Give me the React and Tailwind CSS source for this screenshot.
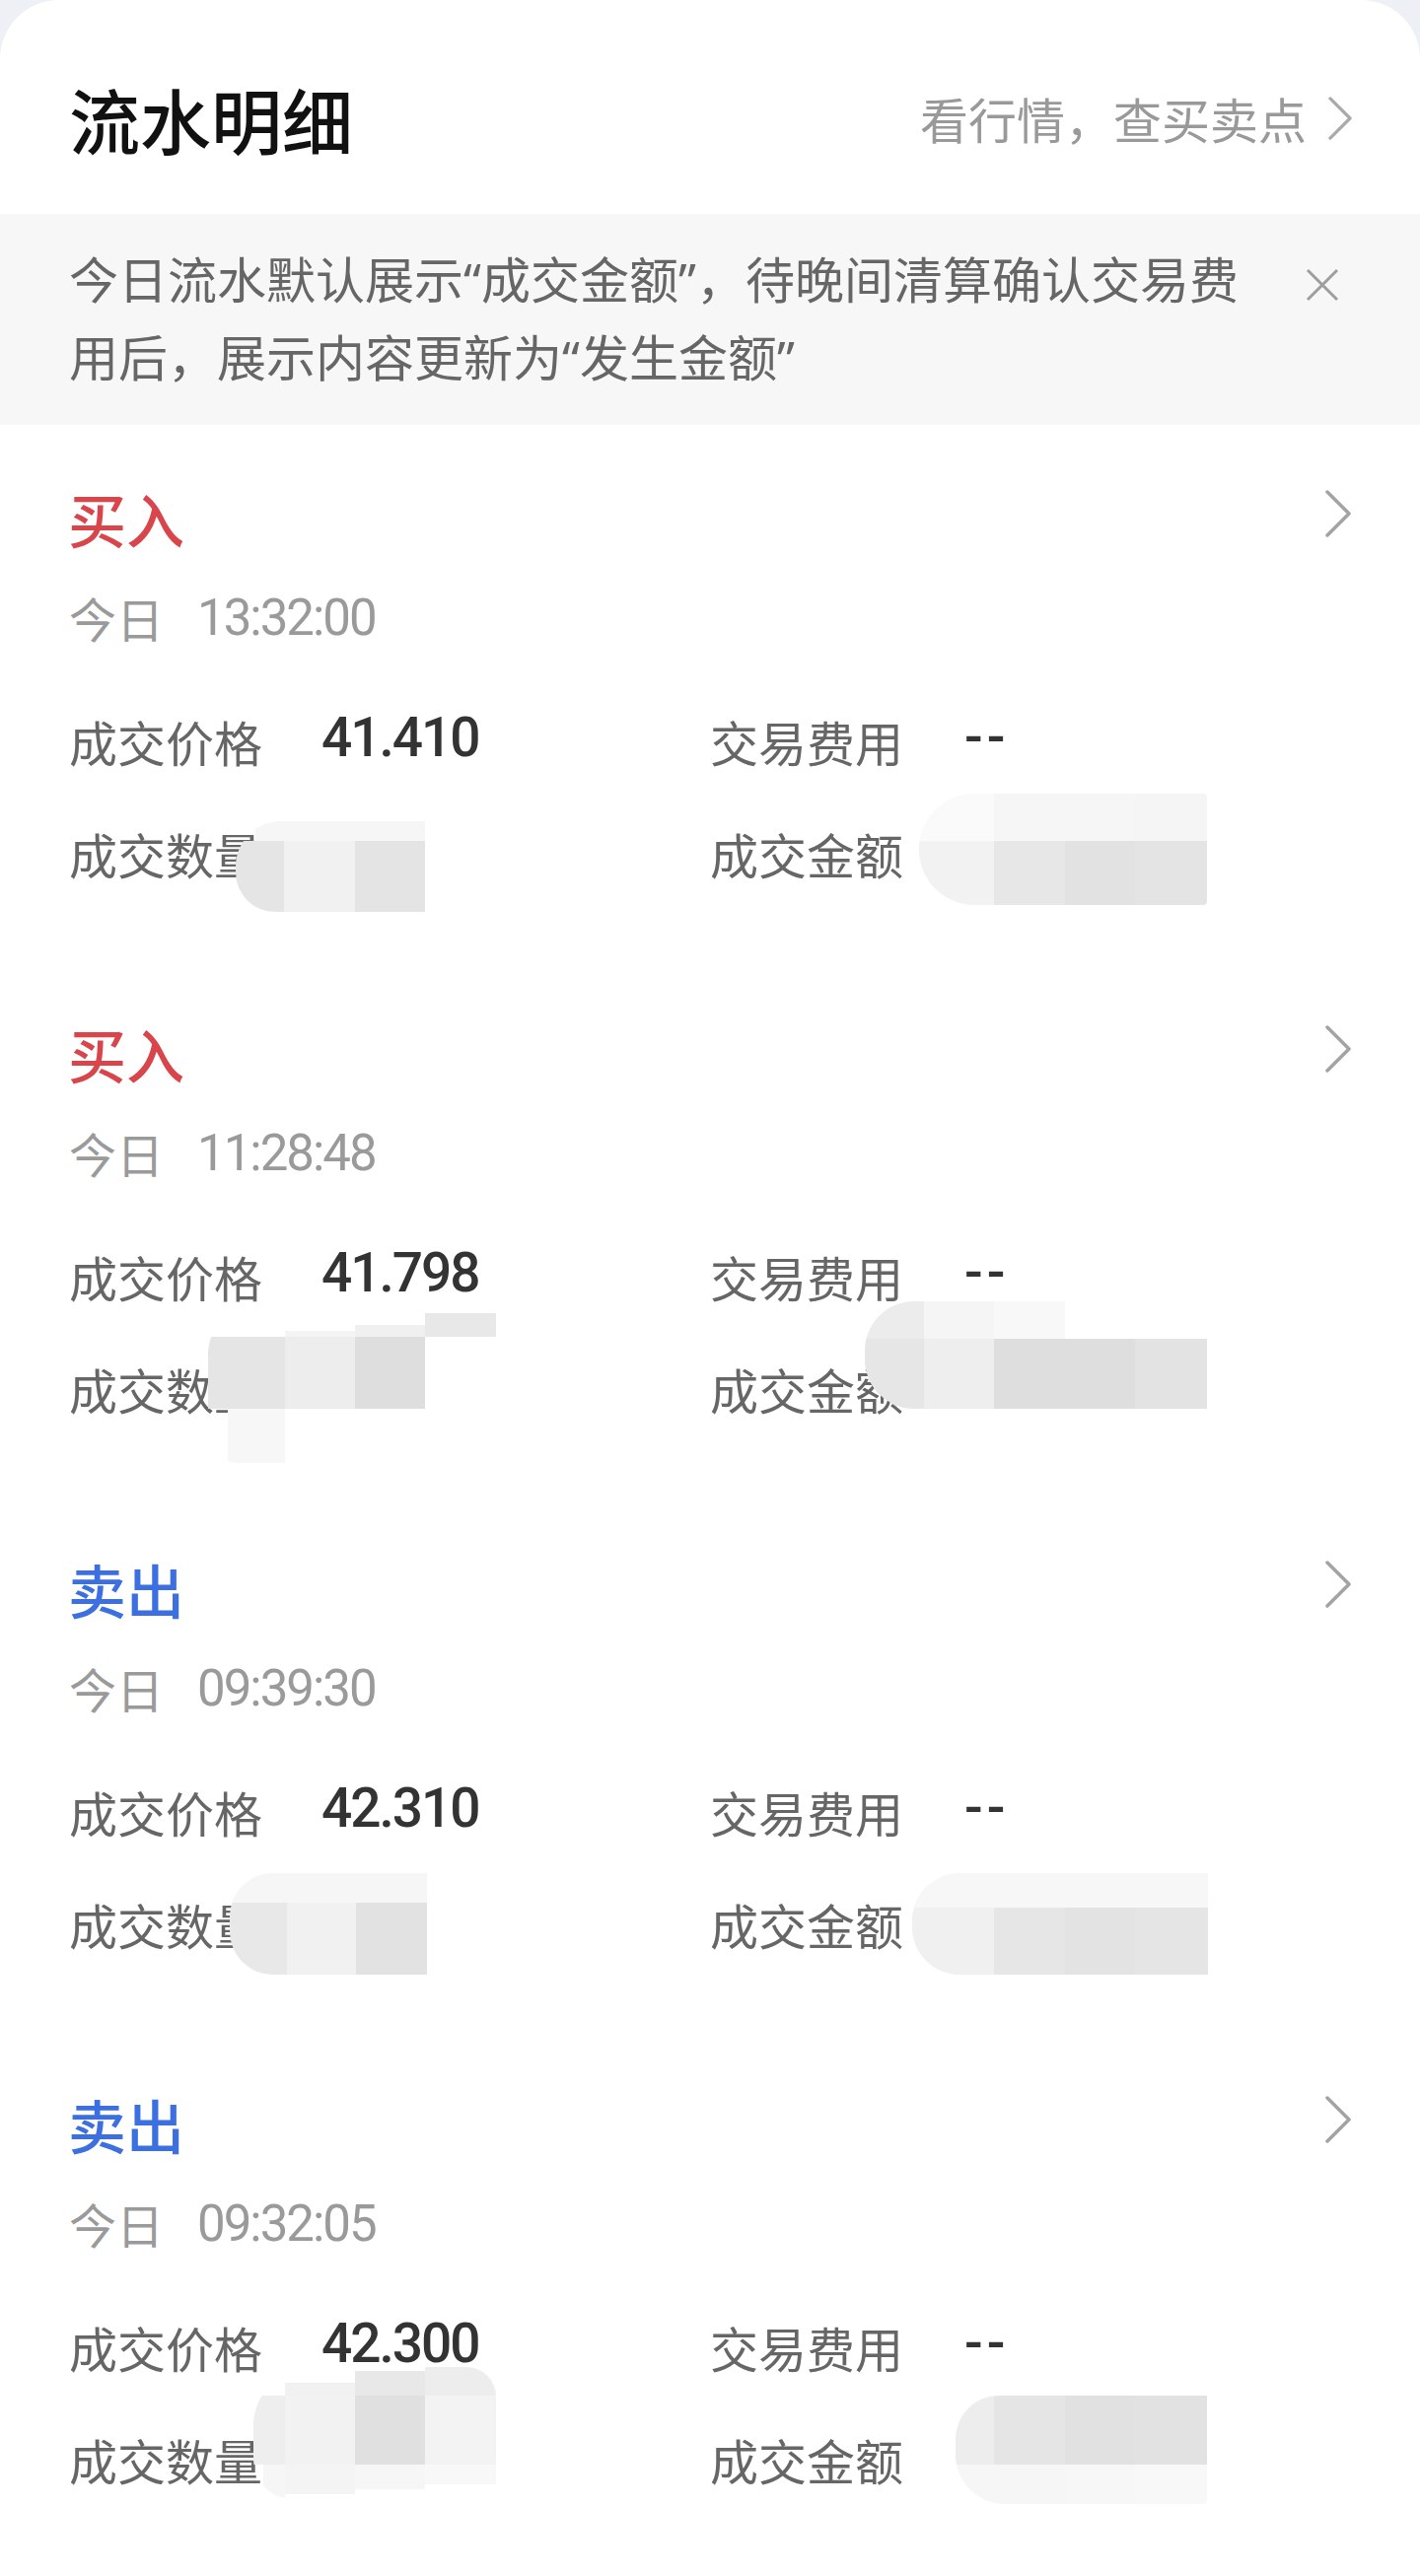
import React from "react";

const CJK = "font-['Noto_Sans_CJK_SC',sans-serif]";
const NUM = "font-['Roboto','Noto_Sans_CJK_SC',sans-serif]";
const Q = "font-['Noto_Sans','Roboto',sans-serif] leading-none";

const cards = [
  {
    type: "买入",
    sell: false,
    time: "13:32:00",
    price: "41.410",
    patches: [
      {
        x: 239, y: 402, w: 192, h: 92, r: "46px 0 0 40px",
        rects: [
          [20, 0, 172, 20, "#f6f6f6"],
          [0, 20, 49, 72, "#e5e5e5"],
          [49, 20, 72, 72, "#f1f1f1"],
          [121, 20, 71, 72, "#e4e4e4"],
        ],
      },
      {
        x: 932, y: 374, w: 292, h: 113, r: "56px 4px 4px 56px",
        rects: [
          [0, 0, 76, 48, "#fafafa"],
          [76, 0, 72, 48, "#f6f6f6"],
          [148, 0, 71, 48, "#f6f6f6"],
          [219, 0, 73, 48, "#f5f5f5"],
          [0, 48, 76, 65, "#f2f2f2"],
          [76, 48, 72, 65, "#e7e7e7"],
          [148, 48, 71, 65, "#e2e2e2"],
          [219, 48, 73, 65, "#e4e4e4"],
        ],
      },
    ],
  },
  {
    type: "买入",
    sell: false,
    time: "11:28:48",
    price: "41.798",
    patches: [
      {
        x: 211, y: 358, w: 292, h: 152, r: "40px 0 0 30px",
        rects: [
          [220, 0, 72, 24, "#e8e8e8"],
          [149, 12, 71, 12, "#f0f0f0"],
          [78, 18, 71, 6, "#f4f4f4"],
          [0, 24, 78, 73, "#e5e5e5"],
          [78, 24, 71, 73, "#ededed"],
          [149, 24, 71, 73, "#dedede"],
          [20, 97, 58, 55, "#f7f7f7"],
        ],
      },
      {
        x: 877, y: 346, w: 347, h: 109, r: "50px 0 0 50px",
        rects: [
          [0, 0, 60, 38, "#ececec"],
          [60, 0, 71, 38, "#f5f5f5"],
          [131, 0, 72, 38, "#f8f8f8"],
          [0, 38, 60, 71, "#e6e6e6"],
          [60, 38, 71, 71, "#eeeeee"],
          [131, 38, 143, 71, "#dedede"],
          [274, 38, 73, 71, "#e3e3e3"],
        ],
      },
    ],
  },
  {
    type: "卖出",
    sell: true,
    time: "09:39:30",
    price: "42.310",
    patches: [
      {
        x: 233, y: 383, w: 200, h: 103, r: "44px 0 0 44px",
        rects: [
          [0, 0, 200, 30, "#f6f6f6"],
          [0, 30, 58, 73, "#e8e8e8"],
          [58, 30, 70, 73, "#f1f1f1"],
          [128, 30, 72, 73, "#e2e2e2"],
        ],
      },
      {
        x: 925, y: 383, w: 300, h: 103, r: "48px 0 0 48px",
        rects: [
          [0, 0, 300, 35, "#f7f7f7"],
          [0, 35, 83, 68, "#f0f0f0"],
          [83, 35, 72, 68, "#e6e6e6"],
          [155, 35, 71, 68, "#e3e3e3"],
          [226, 35, 74, 68, "#e5e5e5"],
        ],
      },
    ],
  },
  {
    type: "卖出",
    sell: true,
    time: "09:32:05",
    price: "42.300",
    patches: [
      {
        x: 257, y: 341, w: 246, h: 134, r: "60px 30px 0 40px",
        rects: [
          [103, 4, 71, 25, "#e8e8e8"],
          [174, 0, 72, 29, "#ededed"],
          [32, 16, 71, 13, "#f1f1f1"],
          [0, 29, 32, 70, "#eeeeee"],
          [32, 29, 71, 70, "#f2f2f2"],
          [103, 29, 71, 70, "#e0e0e0"],
          [174, 29, 72, 70, "#f3f3f3"],
          [10, 99, 22, 35, "#f6f6f6"],
          [32, 99, 71, 30, "#f4f4f4"],
          [103, 99, 71, 25, "#f6f6f6"],
          [174, 99, 72, 20, "#f8f8f8"],
        ],
      },
      {
        x: 969, y: 370, w: 255, h: 110, r: "44px 0 4px 50px",
        rects: [
          [0, 0, 39, 70, "#ededed"],
          [39, 0, 72, 70, "#e5e5e5"],
          [111, 0, 71, 70, "#e1e1e1"],
          [182, 0, 73, 70, "#e2e2e2"],
          [0, 70, 39, 40, "#f6f6f6"],
          [39, 70, 72, 40, "#f6f6f6"],
          [111, 70, 71, 40, "#f7f7f7"],
          [182, 70, 73, 40, "#f8f8f8"],
        ],
      },
    ],
  },
];

function Chevron({ className }) {
  return (
    <svg viewBox="0 0 26 48" className={className} fill="none">
      <polyline
        points="2,2 24,24 2,46"
        stroke="currentColor"
        strokeWidth="3.5"
        strokeLinecap="round"
        strokeLinejoin="round"
      />
    </svg>
  );
}

function Patch({ p }) {
  return (
    <div
      className="absolute overflow-hidden"
      style={{ left: p.x, top: p.y, width: p.w, height: p.h, borderRadius: p.r }}
    >
      {p.rects.map((r, i) => (
        <div
          key={i}
          className="absolute"
          style={{ left: r[0], top: r[1], width: r[2], height: r[3], background: r[4] }}
        />
      ))}
    </div>
  );
}

function Field({ label, value, dash }) {
  return (
    <div className="flex items-center h-[114px]">
      <span className={`${CJK} w-[256px] shrink-0 text-[49px] text-[#666666] leading-none -ml-[2px]`}>
        {label}
      </span>
      {value && (
        <span
          className={`${NUM} text-[55px] font-medium text-[#333333] leading-none ${
            dash ? "tracking-[4px] font-bold -mt-[8px] ml-[2px]" : "tracking-[-2px] -mt-[6px]"
          }`}
        >
          {value}
        </span>
      )}
    </div>
  );
}

function Card({ c }) {
  return (
    <div className="relative pt-[54px] pb-[52px] px-[72px]">
      <div className="flex items-center justify-between h-[80px]">
        <span
          className={`${CJK} text-[59px] font-medium leading-none -ml-[3px] ${
            c.sell ? "text-[#3c6fe0]" : "text-[#d8464b]"
          }`}
        >
          {c.type}
        </span>
        <Chevron className="w-[26px] h-[48px] text-[#a3a3a3] -mr-[2px] -mt-[8px]" />
      </div>
      <div className="flex items-center h-[70px] mt-[26px] text-[#9a9a9a]">
        <span className={`${CJK} text-[48px] leading-none -ml-[2px]`}>今日</span>
        <span className={`${NUM} text-[51px] leading-none ml-[34px] tracking-[-2px]`}>
          {c.time}
        </span>
      </div>
      <div className="grid grid-cols-2 mt-[33px]">
        <Field label="成交价格" value={c.price} />
        <div className="pl-[2px]">
          <Field label="交易费用" value="--" dash />
        </div>
        <Field label="成交数量" />
        <div className="pl-[2px]">
          <Field label="成交金额" />
        </div>
      </div>
      {c.patches.map((p, i) => (
        <Patch key={i} p={p} />
      ))}
    </div>
  );
}

export default function App() {
  return (
    <div className="bg-[#eef0f5] w-[1440px] min-h-[2613px]">
      <div className="bg-white rounded-t-[60px] min-h-[2613px]">
        <div className="h-[217px] pt-[22px] pl-[70px] pr-[72px] flex items-center justify-between">
          <span className={`${CJK} text-[72px] font-medium text-[#111111] leading-none`}>
            流水明细
          </span>
          <div className="flex items-center">
            <span className={`${CJK} text-[49px] text-[#999999] leading-none`}>
              看行情，查买卖点
            </span>
            <Chevron className="w-[24px] h-[44px] text-[#aaaaaa] ml-[22px] -mr-[3px]" />
          </div>
        </div>
        <div className="bg-[#f7f7f7] h-[214px] pt-[25px] pl-[70px] pr-[82px] flex items-start justify-between">
          <p className={`${CJK} text-[50px] leading-[79px] text-[#666666]`}>
            今日流水默认展示<span className={Q}>“</span>成交金额<span className={Q}>”</span>，待晚间清算确认交易费
            <br />
            用后，展示内容更新为<span className={Q}>“</span>发生金额<span className={Q}>”</span>
          </p>
          <svg viewBox="0 0 34 34" className="w-[34px] h-[34px] mt-[30px] text-[#9e9e9e]">
            <path d="M2 2 L32 32 M32 2 L2 32" stroke="currentColor" strokeWidth="3" />
          </svg>
        </div>
        {cards.map((c, i) => (
          <Card key={i} c={c} />
        ))}
      </div>
    </div>
  );
}
